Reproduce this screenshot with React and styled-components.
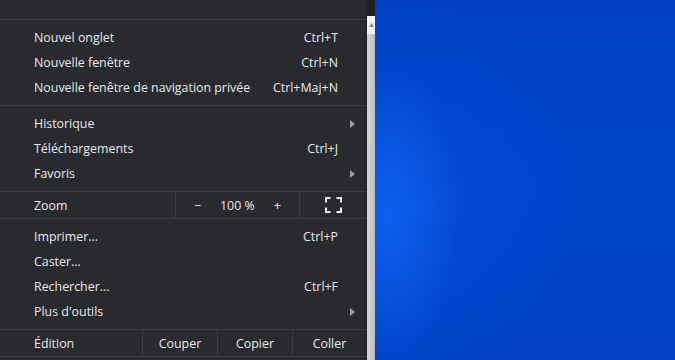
import React from "react";
import styled, { createGlobalStyle } from "styled-components";

const Global = createGlobalStyle`
  html, body { margin: 0; padding: 0; }
  body {
    width: 675px;
    height: 360px;
    overflow: hidden;
    font-family: "Open Sans", "Noto Sans", sans-serif;
  }
`;

const Screen = styled.div`
  display: flex;
  width: 675px;
  height: 360px;
  overflow: hidden;
`;

const Menu = styled.div`
  width: 366px;
  flex: none;
  background: #292a2d;
  color: #e8eaed;
  font-size: 12.4px;
  display: flex;
  flex-direction: column;
`;

const TopGap = styled.div`
  height: 19px;
`;

const Sep = styled.div`
  height: 1px;
  background: #3b3c3f;
`;

const Group = styled.div`
  padding: 5px 0;
  display: flex;
  flex-direction: column;
`;

const Row = styled.div`
  height: 25px;
  display: flex;
  align-items: center;
  padding: 0 ${(p) => (p.$sub ? "11px" : "28px")} 0 34px;
`;

const Label = styled.span`
  flex: 1;
  white-space: nowrap;
`;

const Shortcut = styled.span`
  white-space: nowrap;
`;

const Arrow = styled.span`
  width: 0;
  height: 0;
  border-top: 4px solid transparent;
  border-bottom: 4px solid transparent;
  border-left: 5px solid #9aa0a6;
`;

const SplitRow = styled.div`
  height: 26px;
  display: flex;
  align-items: center;
`;

const SplitLabel = styled.div`
  width: ${(p) => p.$w}px;
  flex: none;
  padding-left: 34px;
  box-sizing: border-box;
`;

const Cell = styled.div`
  width: ${(p) => p.$w}px;
  flex: none;
  height: 100%;
  display: flex;
  align-items: center;
  justify-content: center;
  gap: ${(p) => p.$gap || 0}px;
  border-left: 1px solid #3b3c3f;
  box-sizing: border-box;
`;

const ZoomBtn = styled.span`
  font-size: ${(p) => p.$size || 12.4}px;
  color: #e8eaed;
`;

const Scroll = styled.div`
  width: 9px;
  flex: none;
  display: flex;
  flex-direction: column;
  background: #1f1f21;
  border-left: 1px solid #1f1f21;
  box-sizing: border-box;
`;

const ScrollCorner = styled.div`
  height: 16px;
  background: #202022;
`;

const ScrollCap = styled.div`
  height: 18px;
  background: #f2f2f2;
  display: flex;
  justify-content: center;
  align-items: center;
`;

const ScrollTrack = styled.div`
  flex: 1;
  background: linear-gradient(90deg, #d4d4d4 0%, #c9c9c9 60%, #b9b9b9 100%);
`;

const Desktop = styled.div`
  flex: 1;
  background:
    radial-gradient(ellipse 70px 150px at 15px 215px, rgba(16, 104, 250, 0.75), rgba(16, 104, 250, 0) 100%),
    radial-gradient(ellipse 160px 200px at 40px 200px, rgba(10, 80, 225, 0.45), rgba(10, 80, 225, 0) 100%),
    linear-gradient(180deg, #0041c3 0%, #0245c9 50%, #0142c4 100%);
`;

const FullscreenIcon = () => (
  <svg width="17" height="16" viewBox="0 0 17 16" fill="none" stroke="#eceef0" strokeWidth="2">
    <path d="M1 5.5V1h4.5M11.5 1H16v4.5M16 10.5V15h-4.5M5.5 15H1v-4.5" />
  </svg>
);

const groups = [
  [
    ["Nouvel onglet", "Ctrl+T"],
    ["Nouvelle fenêtre", "Ctrl+N"],
    ["Nouvelle fenêtre de navigation privée", "Ctrl+Maj+N"],
  ],
  [
    ["Historique", null, true],
    ["Téléchargements", "Ctrl+J"],
    ["Favoris", null, true],
  ],
];

const tools = [
  ["Imprimer...", "Ctrl+P"],
  ["Caster..."],
  ["Rechercher...", "Ctrl+F"],
  ["Plus d'outils", null, true],
];

const Item = ({ label, shortcut, sub }) => (
  <Row $sub={sub}>
    <Label>{label}</Label>
    {shortcut && <Shortcut>{shortcut}</Shortcut>}
    {sub && <Arrow />}
  </Row>
);

const renderGroup = (items) => (
  <Group>
    {items.map(([l, s, sub]) => (
      <Item key={l} label={l} shortcut={s} sub={sub} />
    ))}
  </Group>
);

export default function App() {
  return (
    <Screen>
      <Global />
      <Menu>
        <TopGap />
        <Sep />
        {renderGroup(groups[0])}
        <Sep />
        {renderGroup(groups[1])}
        <Sep />
        <SplitRow>
          <SplitLabel $w={175}>Zoom</SplitLabel>
          <Cell $w={124} $gap={19}>
            <ZoomBtn>−</ZoomBtn>
            <ZoomBtn>100 %</ZoomBtn>
            <ZoomBtn $size={13}>+</ZoomBtn>
          </Cell>
          <Cell $w={67}>
            <FullscreenIcon />
          </Cell>
        </SplitRow>
        <Sep />
        {renderGroup(tools)}
        <Sep />
        <SplitRow>
          <SplitLabel $w={142}>Édition</SplitLabel>
          <Cell $w={75}>Couper</Cell>
          <Cell $w={75}>Copier</Cell>
          <Cell $w={74}>Coller</Cell>
        </SplitRow>
        <Sep />
      </Menu>
      <Scroll>
        <ScrollCorner />
        <ScrollCap>
          <svg width="5" height="4" viewBox="0 0 5 4">
            <path d="M0 4L2.5 0L5 4z" fill="#8a8a8a" />
          </svg>
        </ScrollCap>
        <ScrollTrack />
      </Scroll>
      <Desktop />
    </Screen>
  );
}
